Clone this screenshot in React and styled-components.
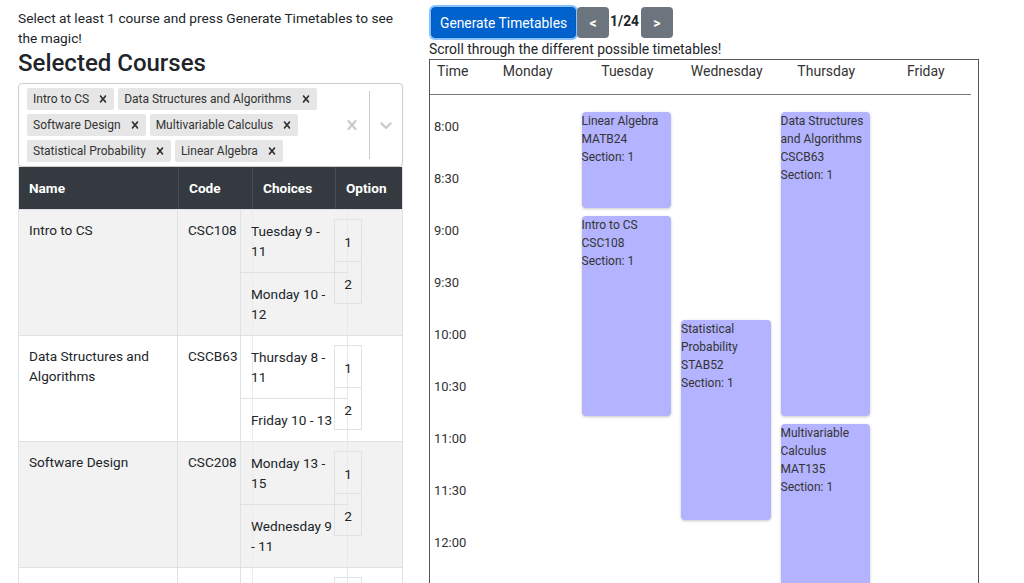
import React from 'react';
import styled, { createGlobalStyle } from 'styled-components';

const GlobalStyle = createGlobalStyle`
  * { box-sizing: border-box; }
  html, body { margin: 0; padding: 0; overflow: hidden; background: #fff; }
  body {
    font-family: Roboto, "Noto Sans", Arial, sans-serif;
    font-size: 13.6px;
    line-height: 20px;
    color: #212529;
  }
`;

const courses = [
  { name: 'Intro to CS', code: 'CSC108', choices: ['Tuesday 9 - 11', 'Monday 10 - 12'] },
  { name: 'Data Structures and Algorithms', code: 'CSCB63', choices: ['Thursday 8 - 11', 'Friday 10 - 13'] },
  { name: 'Software Design', code: 'CSC208', choices: ['Monday 13 - 15', 'Wednesday 9 - 11'] },
  { name: 'Multivariable Calculus', code: 'MAT135', choices: ['Thursday 11 - 13', 'Tuesday 14 - 16'] },
  { name: 'Statistical Probability', code: 'STAB52', choices: ['Wednesday 10 - 12', 'Friday 9 - 11'] },
  { name: 'Linear Algebra', code: 'MATB24', choices: ['Tuesday 8 - 9', 'Thursday 15 - 16'] },
];

const tags = [
  'Intro to CS',
  'Data Structures and Algorithms',
  'Software Design',
  'Multivariable Calculus',
  'Statistical Probability',
  'Linear Algebra',
];

const days = ['Monday', 'Tuesday', 'Wednesday', 'Thursday', 'Friday'];

const events = [
  { day: 1, start: 0, len: 2, lines: ['Linear Algebra', 'MATB24', 'Section: 1'] },
  { day: 1, start: 2, len: 4, lines: ['Intro to CS', 'CSC108', 'Section: 1'] },
  { day: 2, start: 4, len: 4, lines: ['Statistical Probability', 'STAB52', 'Section: 1'] },
  { day: 3, start: 0, len: 6, lines: ['Data Structures and Algorithms', 'CSCB63', 'Section: 1'] },
  { day: 3, start: 6, len: 4, lines: ['Multivariable Calculus', 'MAT135', 'Section: 1'] },
];

const times = [];
for (let h = 8; h <= 19; h += 1) {
  times.push(`${h}:00`, `${h}:30`);
}

/* ---------- layout ---------- */
const Page = styled.div`
  display: flex;
  align-items: flex-start;
  padding-left: 18px;
  height: 583px;
  overflow: hidden;
`;

const LeftColumn = styled.div`
  flex: none;
  width: 385px;
  margin-right: 26px;
  padding-top: 8px;
`;

const Intro = styled.p`
  margin: 0;
  padding-right: 6px;
  font-size: 13.7px;
  line-height: 20px;
`;

const Heading = styled.h4`
  margin: 0 0 5px;
  font-size: 24px;
  line-height: 30px;
  font-weight: 500;
  color: #212529;
`;

/* ---------- multi select ---------- */
const Control = styled.div`
  display: flex;
  min-height: 84px;
  border: 1px solid #ccc;
  border-radius: 4px;
  background: #fff;
`;

const ValueContainer = styled.div`
  flex: 1;
  display: flex;
  flex-wrap: wrap;
  align-content: flex-start;
  padding: 2px 6px;
`;

const Tag = styled.div`
  display: flex;
  align-items: center;
  height: 22px;
  margin: 2px;
  background: #e6e6e6;
  border-radius: 2px;
`;

const TagLabel = styled.span`
  padding: 3px 3px 3px 6px;
  font-size: 12px;
  line-height: 16px;
  color: #333;
  white-space: nowrap;
`;

const TagRemove = styled.span`
  display: flex;
  align-items: center;
  padding: 0 4px;
  color: #333;
`;

const Indicators = styled.div`
  flex: none;
  display: flex;
  align-items: center;
`;

const Indicator = styled.div`
  display: flex;
  align-items: center;
  justify-content: center;
  width: ${(p) => p.$w}px;
  color: #ccc;
`;

const Separator = styled.span`
  align-self: stretch;
  width: 1px;
  margin: 7px 0;
  background: #ccc;
`;

const CrossIcon = ({ size }) => (
  <svg width={size} height={size} viewBox="0 0 20 20" fill="currentColor" aria-hidden="true">
    <path d="M14.348 14.849c-0.469 0.469-1.229 0.469-1.697 0l-2.651-3.030-2.651 3.029c-0.469 0.469-1.229 0.469-1.697 0-0.469-0.469-0.469-1.229 0-1.697l2.758-3.15-2.759-3.152c-0.469-0.469-0.469-1.228 0-1.697s1.228-0.469 1.697 0l2.652 3.031 2.651-3.031c0.469-0.469 1.228-0.469 1.697 0s0.469 1.229 0 1.697l-2.758 3.152 2.758 3.15c0.469 0.469 0.469 1.229 0 1.698z" />
  </svg>
);

const ChevronIcon = () => (
  <svg width="20" height="20" viewBox="0 0 20 20" fill="currentColor" aria-hidden="true">
    <path d="M4.516 7.548c0.436-0.446 1.043-0.481 1.576 0l3.908 3.747 3.908-3.747c0.533-0.481 1.141-0.446 1.574 0 0.436 0.445 0.408 1.197 0 1.615-0.406 0.418-4.695 4.502-4.695 4.502-0.217 0.223-0.502 0.335-0.787 0.335s-0.57-0.112-0.789-0.335c0 0-4.287-4.084-4.695-4.502s-0.436-1.17 0-1.615z" />
  </svg>
);

/* ---------- courses table ---------- */
const Table = styled.div`
  border-left: 1px solid #dee2e6;
  border-right: 1px solid #dee2e6;
`;

const HeadRow = styled.div`
  display: grid;
  grid-template-columns: 159px 74px 83px 1fr;
  background: #343a40;
  color: #fff;
  font-weight: 700;
`;

const HeadCell = styled.div`
  padding: 11px 10px;
  line-height: 20px;
  border-left: ${(p) => (p.$first ? 'none' : '1px solid #454d55')};
`;

const CourseRow = styled.div`
  display: grid;
  grid-template-columns: 159px 62px 94px 14px 14px 1fr;
  border-top: 1px solid #dee2e6;
  background:
    linear-gradient(to right, transparent 233px, #ebebeb 233px, #ebebeb 234px, transparent 234px),
    ${(p) => (p.$striped ? '#f2f2f2' : '#fff')};
`;

const NameCell = styled.div`
  grid-column: 1;
  grid-row: 1;
  padding: 10px;
  border-right: 1px solid #dee2e6;
`;

const CodeCell = styled.div`
  grid-column: 2;
  grid-row: 1;
  padding: 10px 0 10px 10px;
  white-space: nowrap;
`;

const TimesCell = styled.div`
  grid-column: 3 / 5;
  grid-row: 1;
  display: flex;
  flex-direction: column;
  border-left: 1px solid #dee2e6;
  border-right: 1px solid #e9e9e9;
`;

const TimeSlot = styled.div`
  padding: 11px 12px 11px 10px;
  line-height: 20px;
  border-bottom: ${(p) => (p.$last ? 'none' : '1px solid #dee2e6')};
`;

const OptionsCell = styled.div`
  grid-column: 4 / 6;
  grid-row: 1;
  padding-top: 9px;
  display: flex;
  flex-direction: column;
`;

const OptionBox = styled.div`
  height: 43px;
  margin-top: ${(p) => (p.$first ? '0' : '-1px')};
  border: 1px solid #dee2e6;
  display: flex;
  align-items: center;
  justify-content: center;
  padding-top: 2px;
  line-height: 20px;
`;

/* ---------- right side ---------- */
const RightColumn = styled.div`
  flex: none;
  width: 550px;
`;

const Toolbar = styled.div`
  display: flex;
  align-items: flex-start;
  height: 40px;
  padding-top: 7px;
`;

const PrimaryButton = styled.button`
  height: 31px;
  margin: 0 1px 0 2px;
  padding: 0 8px;
  border: 1px solid #005cbf;
  border-radius: 4px;
  background: #0062cc;
  color: #fff;
  font-family: inherit;
  font-size: 13.8px;
  line-height: 20px;
  box-shadow: 0 0 0 2px rgba(38, 143, 255, 0.55);
`;

const PagerButton = styled.button`
  width: 32px;
  height: 31px;
  padding: 0;
  border: none;
  border-radius: 4px;
  background: #6c757d;
  color: #fff;
  font-family: inherit;
  font-size: 14px;
  font-weight: 700;
`;

const PageLabel = styled.span`
  padding: 0 2px 0 1px;
  font-weight: 700;
  font-size: 13.8px;
  line-height: 28px;
`;

const Caption = styled.div`
  font-size: 13.9px;
  line-height: 19px;
`;

const Timetable = styled.div`
  width: 550px;
  height: 600px;
  border: 1px solid #555;
`;

const TTHeader = styled.div`
  display: grid;
  grid-template-columns: 48px repeat(5, 99.5px);
  height: 35px;
  margin-right: 7px;
  padding-top: 1px;
  border-bottom: 1px solid #777;
  font-size: 14px;
  line-height: 20px;
  color: #333;
`;

const TTHeadCell = styled.div`
  text-align: ${(p) => (p.$left ? 'left' : 'center')};
  padding-left: ${(p) => (p.$left ? '7px' : '0')};
  white-space: nowrap;
`;

const TTBody = styled.div`
  display: grid;
  grid-template-columns: 48px repeat(5, 99.5px);
  grid-auto-rows: 52px;
  margin-top: 13px;
`;

const TimeLabel = styled.div`
  grid-column: 1;
  grid-row: ${(p) => p.$row};
  padding: 9px 0 0 4px;
  font-size: 13px;
  line-height: 20px;
  color: #333;
`;

const EventCard = styled.div`
  grid-column: ${(p) => p.$col};
  grid-row: ${(p) => p.$row} / span ${(p) => p.$span};
  margin: 4px 6px 4px 4px;
  background: #b3b3ff;
  border-radius: 4px;
  box-shadow: 0 1px 3px rgba(0, 0, 0, 0.22);
  font-size: 12px;
  line-height: 18px;
  color: #333;
  overflow: hidden;
`;

export default function App() {
  return (
    <>
      <GlobalStyle />
      <Page>
        <LeftColumn>
          <Intro>Select at least 1 course and press Generate Timetables to see the magic!</Intro>
          <Heading>Selected Courses</Heading>
          <Control>
            <ValueContainer>
              {tags.map((t) => (
                <Tag key={t}>
                  <TagLabel>{t}</TagLabel>
                  <TagRemove>
                    <CrossIcon size={14} />
                  </TagRemove>
                </Tag>
              ))}
            </ValueContainer>
            <Indicators>
              <Indicator $w={34}>
                <CrossIcon size={20} />
              </Indicator>
              <Separator />
              <Indicator $w={32}>
                <ChevronIcon />
              </Indicator>
            </Indicators>
          </Control>
          <Table>
            <HeadRow>
              <HeadCell $first>Name</HeadCell>
              <HeadCell>Code</HeadCell>
              <HeadCell>Choices</HeadCell>
              <HeadCell>Option</HeadCell>
            </HeadRow>
            {courses.map((c, i) => (
              <CourseRow key={c.code} $striped={i % 2 === 0}>
                <NameCell>{c.name}</NameCell>
                <CodeCell>{c.code}</CodeCell>
                <TimesCell>
                  {c.choices.map((ch, j) => (
                    <TimeSlot key={ch} $last={j === c.choices.length - 1}>
                      {ch}
                    </TimeSlot>
                  ))}
                </TimesCell>
                <OptionsCell>
                  {c.choices.map((ch, j) => (
                    <OptionBox key={ch} $first={j === 0}>
                      {j + 1}
                    </OptionBox>
                  ))}
                </OptionsCell>
              </CourseRow>
            ))}
          </Table>
        </LeftColumn>

        <RightColumn>
          <Toolbar>
            <PrimaryButton>Generate Timetables</PrimaryButton>
            <PagerButton>&lt;</PagerButton>
            <PageLabel>1/24</PageLabel>
            <PagerButton>&gt;</PagerButton>
          </Toolbar>
          <Caption>Scroll through the different possible timetables!</Caption>
          <Timetable>
            <TTHeader>
              <TTHeadCell $left>Time</TTHeadCell>
              {days.map((d) => (
                <TTHeadCell key={d}>{d}</TTHeadCell>
              ))}
            </TTHeader>
            <TTBody>
              {times.map((t, i) => (
                <TimeLabel key={t} $row={i + 1}>
                  {t}
                </TimeLabel>
              ))}
              {events.map((e) => (
                <EventCard key={e.lines[1]} $col={e.day + 2} $row={e.start + 1} $span={e.len}>
                  {e.lines.map((l) => (
                    <div key={l}>{l}</div>
                  ))}
                </EventCard>
              ))}
            </TTBody>
          </Timetable>
        </RightColumn>
      </Page>
    </>
  );
}
